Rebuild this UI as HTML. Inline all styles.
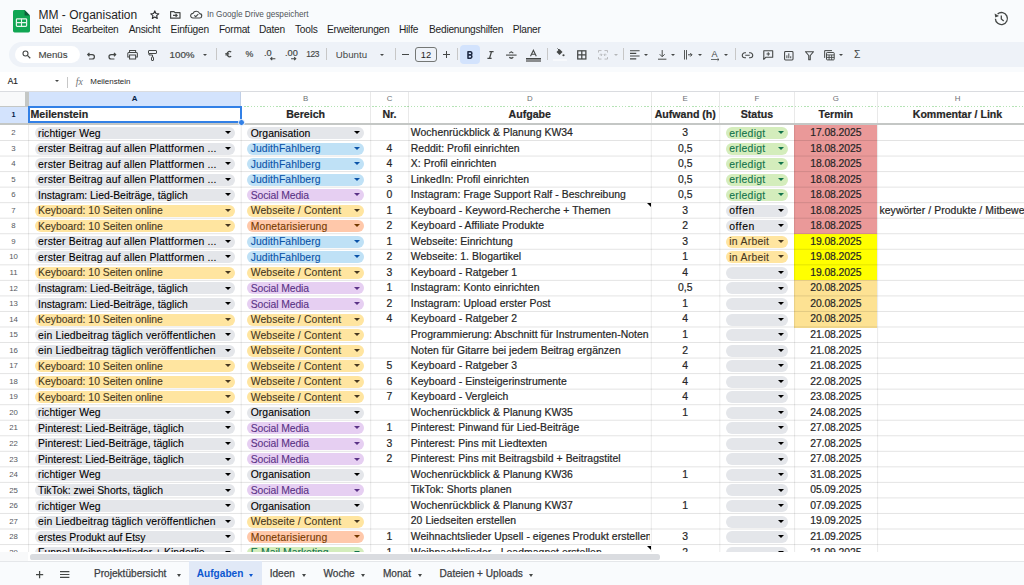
<!DOCTYPE html><html><head><meta charset="utf-8"><style>
*{box-sizing:border-box;margin:0;padding:0}
html,body{width:1024px;height:585px;overflow:hidden;background:#f9fbfd;font-family:"Liberation Sans", sans-serif;}
.a{position:absolute;white-space:nowrap}
.t{position:absolute;white-space:nowrap;line-height:1}
.menu{position:absolute;top:24.9px;font-size:10.2px;letter-spacing:-0.25px;line-height:1;color:#1f1f1f;white-space:nowrap}
svg{position:absolute;overflow:visible}
.cell{position:absolute;font-size:10.4px;line-height:16.0px;white-space:nowrap;overflow:hidden;color:#262626;-webkit-text-stroke:0.2px #262626}
.chip{position:absolute;height:12px;border-radius:6px}
.chip span{position:absolute;left:3.6px;top:-2.5px;font-size:10.4px;line-height:17.2px;white-space:nowrap}
.arr{position:absolute;width:0;height:0;border-left:3.3px solid transparent;border-right:3.3px solid transparent;border-top:3.9px solid #000}
.rn{position:absolute;left:0;width:27px;text-align:center;font-size:7.8px;line-height:15px;color:#55595e}
.hl{position:absolute;height:1px;background:rgba(0,0,0,0.115)}
.vl{position:absolute;width:1px;background:rgba(0,0,0,0.085)}
.tab{position:absolute;top:569.2px;font-size:10.1px;line-height:1;color:#3c4043;-webkit-text-stroke:0.25px #3c4043;white-space:nowrap}
.tarr{position:absolute;top:573.6px;width:0;height:0;border-left:2.7px solid transparent;border-right:2.7px solid transparent;border-top:3px solid #444746}
</style></head><body>
<svg style="left:12.5px;top:9.6px" width="17" height="22.4" viewBox="0 0 17 22.4">
<path d="M1.6 0 H11.6 L17 5.4 V20.8 Q17 22.4 15.4 22.4 H1.6 Q0 22.4 0 20.8 V1.6 Q0 0 1.6 0Z" fill="#11a653"/>
<path d="M11.6 0 V5.4 H17Z" fill="#0d5c3a"/>
<rect x="3.4" y="8.8" width="10.2" height="7.6" rx="0.8" fill="none" stroke="#e8f5ec" stroke-width="1.2"/>
<path d="M3.4 12.6 H13.6 M8.5 8.8 V16.4" stroke="#e8f5ec" stroke-width="1.1"/>
</svg>
<div class="t" style="left:38.5px;top:8.6px;font-size:12px;color:#1f1f1f">MM - Organisation</div>
<svg style="left:150.2px;top:10.0px" width="9.6" height="9.2" viewBox="0 0 24 23"><path d="M12 2.2l2.9 6.6 7.1.6-5.4 4.7 1.6 7-6.2-3.7-6.2 3.7 1.6-7L2 9.4l7.1-.6z" fill="none" stroke="#303134" stroke-width="2.8" stroke-linejoin="round"/></svg>
<svg style="left:170px;top:11px" width="10.6" height="7.8" viewBox="0 0 10.6 7.8"><path d="M0.6 0.6H4L5 1.7H10V7.2H0.6Z" fill="none" stroke="#444746" stroke-width="1.2" stroke-linejoin="round"/><path d="M3 4.4H7.2M5.6 2.9L7.2 4.4 5.6 5.9" fill="none" stroke="#444746" stroke-width="1.1"/></svg>
<svg style="left:190px;top:11.1px" width="12.2" height="7.6" viewBox="0 0 12.2 7.6"><path d="M3 7H9.4a2.2 2.2 0 0 0 .3-4.4A3.7 3.7 0 0 0 2.9 2.4 2.3 2.3 0 0 0 3 7z" fill="none" stroke="#444746" stroke-width="1.15" stroke-linejoin="round"/><path d="M4.3 4.3l1.4 1.4 2.6-2.6" fill="none" stroke="#444746" stroke-width="1.1"/></svg>
<div class="t" style="left:207px;top:10.6px;font-size:8.2px;color:#4f5358">In Google Drive gespeichert</div>
<div class="menu" style="left:39.2px">Datei</div>
<div class="menu" style="left:71.7px">Bearbeiten</div>
<div class="menu" style="left:128.7px">Ansicht</div>
<div class="menu" style="left:170.6px">Einfügen</div>
<div class="menu" style="left:218.9px">Format</div>
<div class="menu" style="left:258.9px">Daten</div>
<div class="menu" style="left:295px">Tools</div>
<div class="menu" style="left:327px">Erweiterungen</div>
<div class="menu" style="left:399px">Hilfe</div>
<div class="menu" style="left:429px">Bedienungshilfen</div>
<div class="menu" style="left:512.7px">Planer</div>
<svg style="left:994px;top:11.8px" width="14" height="13.5" viewBox="0 0 14 13.5"><path d="M3.6 1.9 A6 6 0 1 1 1.4 6.7" fill="none" stroke="#444746" stroke-width="1.35"/><path d="M0.6 1.6 L1.3 5.6 L5 4.1Z" fill="#444746"/><path d="M7.3 3.6v3.4l2.4 2.1" fill="none" stroke="#444746" stroke-width="1.3"/></svg>
<div class="a" style="left:8.8px;top:41.6px;width:1040px;height:25.6px;border-radius:13px;background:#eef2f8"></div>
<div class="a" style="left:15.2px;top:45.8px;width:64.5px;height:17.6px;border-radius:9px;background:#fff"></div>
<svg style="left:22px;top:49.5px" width="9" height="9" viewBox="0 0 18 18"><circle cx="7" cy="7" r="5" fill="none" stroke="#444746" stroke-width="2.2"/><path d="M10.8 10.8L16.5 16.5" stroke="#444746" stroke-width="2.4"/></svg>
<div class="t" style="left:38.5px;top:50.2px;font-size:9.7px;color:#444746;-webkit-text-stroke:0.15px #444746">Menüs</div>
<svg style="left:87px;top:51.6px" width="8.4" height="7.6" viewBox="0 0 17 15"><path d="M5 1.5 L1.5 5 L5 8.5" fill="none" stroke="#444746" stroke-width="2.5"/><path d="M2 5H10.5a4.5 4.5 0 0 1 0 9H4" fill="none" stroke="#444746" stroke-width="2.5"/></svg>
<svg style="left:107.5px;top:51.6px" width="8.4" height="7.6" viewBox="0 0 17 15"><path d="M12 1.5 L15.5 5 L12 8.5" fill="none" stroke="#444746" stroke-width="2.5"/><path d="M15 5H6.5a4.5 4.5 0 0 0 0 9H13" fill="none" stroke="#444746" stroke-width="2.5"/></svg>
<svg style="left:127px;top:50.2px" width="11.2" height="9.6" viewBox="0 0 22 19"><path d="M5 5V1h12v4" fill="none" stroke="#444746" stroke-width="2"/><path d="M5 14H1.5V7a2 2 0 0 1 2-2h15a2 2 0 0 1 2 2v7H17" fill="none" stroke="#444746" stroke-width="2"/><path d="M5 10h12v8H5z" fill="none" stroke="#444746" stroke-width="2"/></svg>
<svg style="left:148px;top:49.8px" width="9" height="11" viewBox="0 0 18 22"><rect x="1" y="1" width="16" height="6" rx="1" fill="none" stroke="#444746" stroke-width="2"/><path d="M2 7v3h7v4" fill="none" stroke="#444746" stroke-width="2"/><rect x="7" y="14" width="4" height="7" rx="1" fill="none" stroke="#444746" stroke-width="2"/></svg>
<div class="t" style="left:169.5px;top:50.2px;font-size:9.8px;color:#444746;-webkit-text-stroke:0.2px #444746">100%</div>
<div class="a" style="left:202.5px;top:53.8px;width:0;height:0;border-left:2.3px solid transparent;border-right:2.3px solid transparent;border-top:2.6px solid #444746"></div>
<div class="a" style="left:215.6px;top:48.3px;width:1px;height:12px;background:#c7c7c7"></div>
<svg style="left:225.2px;top:50.8px" width="6.6" height="6.4" viewBox="0 0 6.6 6.4"><path d="M6.2 1.1A2.6 2.6 0 1 0 6.2 5.3" fill="none" stroke="#444746" stroke-width="1.2"/><path d="M0.2 2.6H4.2M0.2 3.9H4.2" stroke="#444746" stroke-width="0.9"/></svg>
<div class="t" style="left:245.4px;top:50.2px;font-size:8.8px;color:#444746;-webkit-text-stroke:0.2px #444746">%</div>
<div class="t" style="left:264px;top:49px;font-size:9.2px;-webkit-text-stroke:0.2px #444746;color:#444746">.0</div>
<svg style="left:270.4px;top:57px" width="5.4" height="3.4" viewBox="0 0 11 7"><path d="M11 3.5H2M4.5 0.5L1.2 3.5 4.5 6.5" fill="none" stroke="#444746" stroke-width="2.2"/></svg>
<div class="t" style="left:285px;top:49px;font-size:9.2px;-webkit-text-stroke:0.2px #444746;color:#444746">.00</div>
<svg style="left:290.6px;top:57px" width="5.4" height="3.4" viewBox="0 0 11 7"><path d="M0 3.5H9M6.5 0.5L9.8 3.5 6.5 6.5" fill="none" stroke="#444746" stroke-width="2.2"/></svg>
<div class="t" style="left:306.2px;top:50.3px;font-size:8.4px;letter-spacing:-0.35px;color:#444746;-webkit-text-stroke:0.15px #444746">123</div>
<div class="a" style="left:325.6px;top:48.3px;width:1px;height:12px;background:#c7c7c7"></div>
<div class="t" style="left:335.8px;top:49.6px;font-size:9.7px;color:#444746">Ubuntu</div>
<div class="a" style="left:379.6px;top:53.8px;width:0;height:0;border-left:2.3px solid transparent;border-right:2.3px solid transparent;border-top:2.6px solid #444746"></div>
<div class="a" style="left:394.5px;top:48.3px;width:1px;height:12px;background:#c7c7c7"></div>
<div class="a" style="left:401.8px;top:54.2px;width:7px;height:1.2px;background:#444746"></div>
<div class="a" style="left:415.1px;top:47px;width:21.6px;height:15.2px;border:1px solid #747775;border-radius:3px;background:transparent"></div>
<div class="t" style="left:415.1px;width:21.6px;text-align:center;top:50.2px;font-size:9.4px;color:#1f1f1f">12</div>
<div class="a" style="left:443px;top:54.2px;width:7px;height:1.2px;background:#444746"></div><div class="a" style="left:445.9px;top:51.3px;width:1.2px;height:7px;background:#444746"></div>
<div class="a" style="left:457.3px;top:48.3px;width:1px;height:12px;background:#c7c7c7"></div>
<div class="a" style="left:460.4px;top:45px;width:19.4px;height:19px;border-radius:4px;background:#d3e3fd"></div>
<svg style="left:466.8px;top:50.7px" width="6.4" height="7.8" viewBox="0 0 6.4 7.8"><path d="M1 0.8H3.6a1.7 1.7 0 0 1 0 3.3H1ZM1 3.9H3.9a1.9 1.9 0 0 1 0 3.3H1Z" fill="none" stroke="#1f2a44" stroke-width="1.55" stroke-linejoin="round"/></svg>
<svg style="left:487.3px;top:50.8px" width="7" height="8" viewBox="0 0 7 8"><path d="M2.4 0.6H6.6M0.4 7.4H4.6M4.5 0.6L2.5 7.4" fill="none" stroke="#444746" stroke-width="1.3"/></svg>
<svg style="left:506.4px;top:50.6px" width="10.6" height="8.2" viewBox="0 0 10.6 8.2"><path d="M0 4.1H10.6" stroke="#444746" stroke-width="1.1"/><path d="M7.2 2.2A2 1.7 0 0 0 3.4 2.2" fill="none" stroke="#444746" stroke-width="1.1"/><path d="M3.4 6A2 1.7 0 0 0 7.2 6" fill="none" stroke="#444746" stroke-width="1.1"/><path d="M5.3 0.5V1.3M5.3 6.9V7.7" stroke="#444746" stroke-width="1"/></svg>
<svg style="left:529.6px;top:49.9px" width="6.8" height="6.2" viewBox="0 0 6.8 6.2"><path d="M0.5 6.2L3.4 0.3 6.3 6.2M1.5 4.2H5.3" fill="none" stroke="#444746" stroke-width="1.1"/></svg><div class="a" style="left:525.7px;top:57.8px;width:15px;height:1px;background:#444746"></div><div class="a" style="left:525.7px;top:59px;width:15px;height:2.8px;background:#8a8c8e"></div>
<div class="a" style="left:546.5px;top:48.3px;width:1px;height:12px;background:#c7c7c7"></div>
<svg style="left:554.6px;top:47.6px" width="10" height="9" viewBox="0 0 20 18"><path d="M3 8 L9 2 L15 8 L9 14Z" fill="#444746"/><path d="M5 1 L9 5" stroke="#444746" stroke-width="2"/><circle cx="17" cy="14.5" r="2.2" fill="#444746"/></svg>
<div class="a" style="left:553px;top:58.8px;width:14px;height:2px;background:#f7f9fc"></div>
<svg style="left:577px;top:50.2px" width="9.6" height="9.8" viewBox="0 0 20 20"><rect x="1.5" y="1.5" width="17" height="17" fill="none" stroke="#444746" stroke-width="2.6"/><path d="M10 1.5v17M1.5 10h17" stroke="#444746" stroke-width="2.6"/></svg>
<svg style="left:598px;top:50.4px" width="10" height="9.6" viewBox="0 0 20 19"><path d="M1 5V1h6M1 14v4h6M19 5V1h-6M19 14v4h-6" fill="none" stroke="#b4b6b8" stroke-width="1.8"/><path d="M3 9.5h5M6 7l2 2.5L6 12M17 9.5h-5M14 7l-2 2.5 2 2.5" fill="none" stroke="#b4b6b8" stroke-width="1.6"/></svg>
<div class="a" style="left:614.4px;top:54px;width:0;height:0;border-left:2.3px solid transparent;border-right:2.3px solid transparent;border-top:2.6px solid #b4b6b8"></div>
<div class="a" style="left:623.4px;top:48.3px;width:1px;height:12px;background:#c7c7c7"></div>
<svg style="left:630.3px;top:50.4px" width="9.6" height="9.6" viewBox="0 0 20 20"><path d="M0 1.5h20M0 7h13M0 12.5h20M0 18.5h13" stroke="#444746" stroke-width="2.2"/></svg>
<div class="a" style="left:644.3px;top:54px;width:0;height:0;border-left:2.3px solid transparent;border-right:2.3px solid transparent;border-top:2.6px solid #444746"></div>
<svg style="left:657.6px;top:50.2px" width="8.4" height="10" viewBox="0 0 17 20"><path d="M8.5 0v13M3.5 8.5l5 5 5-5" fill="none" stroke="#444746" stroke-width="2"/><path d="M0 18.5h17" stroke="#444746" stroke-width="2"/></svg>
<div class="a" style="left:671px;top:54px;width:0;height:0;border-left:2.3px solid transparent;border-right:2.3px solid transparent;border-top:2.6px solid #444746"></div>
<svg style="left:683.6px;top:50.4px" width="9" height="9.6" viewBox="0 0 18 19"><path d="M1 0v19M5 0v19" stroke="#444746" stroke-width="1.8"/><path d="M8 9.5h8M12.5 6l3.5 3.5-3.5 3.5" fill="none" stroke="#444746" stroke-width="2"/></svg>
<div class="a" style="left:697.9px;top:54px;width:0;height:0;border-left:2.3px solid transparent;border-right:2.3px solid transparent;border-top:2.6px solid #444746"></div>
<div class="t" style="left:711.5px;top:49.8px;font-size:9px;color:#444746">A</div>
<svg style="left:711px;top:58px" width="9" height="3" viewBox="0 0 18 6"><path d="M0 3h16M13 0.5l3 2.5-3 2.5" fill="none" stroke="#444746" stroke-width="1.6"/></svg>
<div class="a" style="left:724.3px;top:54px;width:0;height:0;border-left:2.3px solid transparent;border-right:2.3px solid transparent;border-top:2.6px solid #444746"></div>
<div class="a" style="left:734.6px;top:48.3px;width:1px;height:12px;background:#c7c7c7"></div>
<svg style="left:742px;top:51.6px" width="11" height="6.6" viewBox="0 0 22 13"><path d="M8 1.5H5.5a5 5 0 0 0 0 10H8M14 1.5h2.5a5 5 0 0 1 0 10H14M6.5 6.5h9" fill="none" stroke="#444746" stroke-width="2.2"/></svg>
<svg style="left:763px;top:50.2px" width="10.5" height="10.4" viewBox="0 0 21 21"><path d="M1.5 1.5h18v13H6l-4.5 4.5z" fill="none" stroke="#444746" stroke-width="2.2" stroke-linejoin="round"/><path d="M10.5 4.5v7M7 8h7" stroke="#444746" stroke-width="2"/></svg>
<svg style="left:784px;top:50.8px" width="9.6" height="9.6" viewBox="0 0 20 20"><rect x="1.2" y="1.2" width="17.6" height="17.6" rx="2" fill="none" stroke="#444746" stroke-width="2.2"/><path d="M6 15V9M10 15V5M14 15v-4" stroke="#444746" stroke-width="2"/></svg>
<svg style="left:805px;top:51.2px" width="9" height="9" viewBox="0 0 18 18"><path d="M1 1.5h16L10.5 9v8.5h-3V9z" fill="none" stroke="#444746" stroke-width="2.2" stroke-linejoin="round"/></svg>
<svg style="left:823.6px;top:50.4px" width="11" height="10.4" viewBox="0 0 22 21"><path d="M1.2 16V1.2H16" fill="none" stroke="#444746" stroke-width="2"/><rect x="5" y="5" width="15.5" height="15" rx="1.5" fill="none" stroke="#444746" stroke-width="2"/><path d="M5 10h15.5M5 15h15.5M10.2 10v10M15.3 10v10" stroke="#444746" stroke-width="1.8"/></svg>
<div class="a" style="left:838.5px;top:54px;width:0;height:0;border-left:2.3px solid transparent;border-right:2.3px solid transparent;border-top:2.6px solid #444746"></div>
<div class="t" style="left:854px;top:49.6px;font-size:10.4px;color:#444746">Σ</div>
<div class="a" style="left:0;top:72px;width:1024px;height:19.2px;background:#fff"></div>
<div class="t" style="left:7.8px;top:78.2px;font-size:8.2px;color:#1f1f1f;-webkit-text-stroke:0.2px #1f1f1f">A1</div>
<div class="a" style="left:54.7px;top:80.2px;width:0;height:0;border-left:2.3px solid transparent;border-right:2.3px solid transparent;border-top:2.6px solid #444746"></div>
<div class="a" style="left:67.3px;top:76.7px;width:1px;height:11px;background:#c7c7c7"></div>
<div class="t" style="left:75.8px;top:77.4px;font-size:9.8px;font-style:italic;color:#6f7378;font-family:'Liberation Serif',serif">fx</div>
<div class="t" style="left:90.3px;top:78.2px;font-size:7.95px;color:#1f1f1f">Meilenstein</div>
<div class="a" style="left:0;top:91px;width:1024px;height:461.29999999999995px;background:#fff;overflow:hidden">
<div class="a" style="left:0;top:0;width:1024px;height:1px;background:#dadce0"></div>
<div class="a" style="left:0;top:0.9px;width:25px;height:14.500000000000005px;background:#f8f9fa"></div>
<div class="a" style="left:28.3px;top:0.9px;width:212.6px;height:14.500000000000005px;background:#d3e3fd"></div>
<div class="a" style="left:0;top:15.400000000000006px;width:28.3px;height:16.19999999999999px;background:#d3e3fd"></div>
<div class="t" style="left:28.3px;width:212.6px;text-align:center;top:4.0px;font-size:7.9px;font-weight:700;color:#041e49">A</div>
<div class="t" style="left:240.9px;width:129.49999999999997px;text-align:center;top:4.0px;font-size:7.9px;font-weight:400;color:#6d7175">B</div>
<div class="t" style="left:370.4px;width:38.200000000000045px;text-align:center;top:4.0px;font-size:7.9px;font-weight:400;color:#6d7175">C</div>
<div class="t" style="left:408.6px;width:242.39999999999998px;text-align:center;top:4.0px;font-size:7.9px;font-weight:400;color:#6d7175">D</div>
<div class="t" style="left:651.0px;width:68.5px;text-align:center;top:4.0px;font-size:7.9px;font-weight:400;color:#6d7175">E</div>
<div class="t" style="left:719.5px;width:74.79999999999995px;text-align:center;top:4.0px;font-size:7.9px;font-weight:400;color:#6d7175">F</div>
<div class="t" style="left:794.3px;width:83.0px;text-align:center;top:4.0px;font-size:7.9px;font-weight:400;color:#6d7175">G</div>
<div class="t" style="left:877.3px;width:160.4000000000001px;text-align:center;top:4.0px;font-size:7.9px;font-weight:400;color:#6d7175">H</div>
<div class="vl" style="left:240.4px;top:1px;height:14.400000000000006px"></div>
<div class="vl" style="left:369.9px;top:1px;height:14.400000000000006px"></div>
<div class="vl" style="left:408.1px;top:1px;height:14.400000000000006px"></div>
<div class="vl" style="left:650.5px;top:1px;height:14.400000000000006px"></div>
<div class="vl" style="left:719.0px;top:1px;height:14.400000000000006px"></div>
<div class="vl" style="left:793.8px;top:1px;height:14.400000000000006px"></div>
<div class="vl" style="left:876.8px;top:1px;height:14.400000000000006px"></div>
<div class="a" style="left:240.9px;top:15.299999999999997px;width:783.1px;height:0;background:repeating-linear-gradient(90deg,#b5e3b5 0 1.4px,transparent 1.4px 3.2px);height:1px"></div>
<div class="a" style="left:25px;top:0.9px;width:3.5px;height:14.500000000000005px;background:#c4c7c5"></div>
<div class="a" style="left:0;top:15.200000000000003px;width:28px;height:1px;background:#c4c7c5"></div>
<div class="cell" style="left:28.3px;width:212.6px;top:15.1px;font-weight:700;font-size:10.6px;padding-left:2.2px">Meilenstein</div>
<div class="cell" style="left:240.9px;width:129.49999999999997px;top:15.1px;font-weight:700;font-size:10.6px;text-align:center">Bereich</div>
<div class="vl" style="left:240.4px;top:15.400000000000006px;height:16.19999999999999px"></div>
<div class="cell" style="left:370.4px;width:38.200000000000045px;top:15.1px;font-weight:700;font-size:10.6px;text-align:center">Nr.</div>
<div class="vl" style="left:369.9px;top:15.400000000000006px;height:16.19999999999999px"></div>
<div class="cell" style="left:408.6px;width:242.39999999999998px;top:15.1px;font-weight:700;font-size:10.6px;text-align:center">Aufgabe</div>
<div class="vl" style="left:408.1px;top:15.400000000000006px;height:16.19999999999999px"></div>
<div class="cell" style="left:651.0px;width:68.5px;top:15.1px;font-weight:700;font-size:10.6px;text-align:center">Aufwand (h)</div>
<div class="vl" style="left:650.5px;top:15.400000000000006px;height:16.19999999999999px"></div>
<div class="cell" style="left:719.5px;width:74.79999999999995px;top:15.1px;font-weight:700;font-size:10.6px;text-align:center">Status</div>
<div class="vl" style="left:719.0px;top:15.400000000000006px;height:16.19999999999999px"></div>
<div class="cell" style="left:794.3px;width:83.0px;top:15.1px;font-weight:700;font-size:10.6px;text-align:center">Termin</div>
<div class="vl" style="left:793.8px;top:15.400000000000006px;height:16.19999999999999px"></div>
<div class="cell" style="left:877.3px;width:160.4000000000001px;top:15.1px;font-weight:700;font-size:10.6px;text-align:center">Kommentar / Link</div>
<div class="vl" style="left:876.8px;top:15.400000000000006px;height:16.19999999999999px"></div>
<div class="t" style="left:0;width:27px;text-align:center;top:20.200000000000003px;font-size:7.3px;font-weight:700;color:#041e49">1</div>
<div class="a" style="left:0;top:31.5px;width:1024px;height:2.6px;background:#c4c7c5"></div>
<div class="rn" style="top:34.2px">2</div>
<div class="a" style="left:794.3px;top:34.0px;width:83.0px;height:16.109999999999992px;background:#ea9999"></div>
<div class="chip" style="left:34.5px;top:36.1px;width:200.4px;background:#e4e6ea"><span style="color:#000000;-webkit-text-stroke:0.1px #000000;letter-spacing:0.12px">richtiger Weg</span><div class="arr" style="right:4.3px;top:4.1px;border-top-color:#000000"></div></div>
<div class="chip" style="left:247.1px;top:36.1px;width:117.29999999999998px;background:#e4e6ea"><span style="color:#000000;-webkit-text-stroke:0.1px #000000;letter-spacing:0.06px">Organisation</span><div class="arr" style="right:4.3px;top:4.1px;border-top-color:#000000"></div></div>
<div class="chip" style="left:725.7px;top:36.1px;width:62.59999999999991px;background:#d4edbc"><span style="color:#11734b;-webkit-text-stroke:0.1px #11734b;letter-spacing:0.25px">erledigt</span><div class="arr" style="right:4.3px;top:4.1px;border-top-color:#11734b"></div></div>
<div class="cell" style="left:408.6px;width:241.89999999999998px;top:34.0px;padding-left:2.2px;letter-spacing:0.06px">Wochenrückblick &amp; Planung KW34</div>
<div class="cell" style="left:651.0px;width:68.5px;top:34.0px;text-align:center">3</div>
<div class="cell" style="left:794.3px;width:83.0px;top:34.0px;text-align:center;letter-spacing:-0.08px">17.08.2025</div>
<div class="rn" style="top:49.709999999999994px">3</div>
<div class="a" style="left:794.3px;top:49.50999999999999px;width:83.0px;height:16.140000000000022px;background:#ea9999"></div>
<div class="chip" style="left:34.5px;top:51.60999999999999px;width:200.4px;background:#e4e6ea"><span style="color:#000000;-webkit-text-stroke:0.1px #000000;letter-spacing:0.16px">erster Beitrag auf allen Plattformen ...</span><div class="arr" style="right:4.3px;top:4.1px;border-top-color:#000000"></div></div>
<div class="chip" style="left:247.1px;top:51.60999999999999px;width:117.29999999999998px;background:#bfe1f6"><span style="color:#0a53a8;-webkit-text-stroke:0.1px #0a53a8;letter-spacing:0.08px">JudithFahlberg</span><div class="arr" style="right:4.3px;top:4.1px;border-top-color:#0a53a8"></div></div>
<div class="chip" style="left:725.7px;top:51.60999999999999px;width:62.59999999999991px;background:#d4edbc"><span style="color:#11734b;-webkit-text-stroke:0.1px #11734b;letter-spacing:0.25px">erledigt</span><div class="arr" style="right:4.3px;top:4.1px;border-top-color:#11734b"></div></div>
<div class="cell" style="left:370.4px;width:38.200000000000045px;top:49.50999999999999px;text-align:center">4</div>
<div class="cell" style="left:408.6px;width:241.89999999999998px;top:49.50999999999999px;padding-left:2.2px;letter-spacing:0.06px">Reddit: Profil einrichten</div>
<div class="cell" style="left:651.0px;width:68.5px;top:49.50999999999999px;text-align:center">0,5</div>
<div class="cell" style="left:794.3px;width:83.0px;top:49.50999999999999px;text-align:center;letter-spacing:-0.08px">18.08.2025</div>
<div class="rn" style="top:65.25000000000001px">4</div>
<div class="a" style="left:794.3px;top:65.05000000000001px;width:83.0px;height:16.139999999999993px;background:#ea9999"></div>
<div class="chip" style="left:34.5px;top:67.15px;width:200.4px;background:#e4e6ea"><span style="color:#000000;-webkit-text-stroke:0.1px #000000;letter-spacing:0.16px">erster Beitrag auf allen Plattformen ...</span><div class="arr" style="right:4.3px;top:4.1px;border-top-color:#000000"></div></div>
<div class="chip" style="left:247.1px;top:67.15px;width:117.29999999999998px;background:#bfe1f6"><span style="color:#0a53a8;-webkit-text-stroke:0.1px #0a53a8;letter-spacing:0.08px">JudithFahlberg</span><div class="arr" style="right:4.3px;top:4.1px;border-top-color:#0a53a8"></div></div>
<div class="chip" style="left:725.7px;top:67.15px;width:62.59999999999991px;background:#d4edbc"><span style="color:#11734b;-webkit-text-stroke:0.1px #11734b;letter-spacing:0.25px">erledigt</span><div class="arr" style="right:4.3px;top:4.1px;border-top-color:#11734b"></div></div>
<div class="cell" style="left:370.4px;width:38.200000000000045px;top:65.05000000000001px;text-align:center">4</div>
<div class="cell" style="left:408.6px;width:241.89999999999998px;top:65.05000000000001px;padding-left:2.2px;letter-spacing:0.06px">X: Profil einrichten</div>
<div class="cell" style="left:651.0px;width:68.5px;top:65.05000000000001px;text-align:center">0,5</div>
<div class="cell" style="left:794.3px;width:83.0px;top:65.05000000000001px;text-align:center;letter-spacing:-0.08px">18.08.2025</div>
<div class="rn" style="top:80.79px">5</div>
<div class="a" style="left:794.3px;top:80.59px;width:83.0px;height:16.139999999999993px;background:#ea9999"></div>
<div class="chip" style="left:34.5px;top:82.69px;width:200.4px;background:#e4e6ea"><span style="color:#000000;-webkit-text-stroke:0.1px #000000;letter-spacing:0.16px">erster Beitrag auf allen Plattformen ...</span><div class="arr" style="right:4.3px;top:4.1px;border-top-color:#000000"></div></div>
<div class="chip" style="left:247.1px;top:82.69px;width:117.29999999999998px;background:#bfe1f6"><span style="color:#0a53a8;-webkit-text-stroke:0.1px #0a53a8;letter-spacing:0.08px">JudithFahlberg</span><div class="arr" style="right:4.3px;top:4.1px;border-top-color:#0a53a8"></div></div>
<div class="chip" style="left:725.7px;top:82.69px;width:62.59999999999991px;background:#d4edbc"><span style="color:#11734b;-webkit-text-stroke:0.1px #11734b;letter-spacing:0.25px">erledigt</span><div class="arr" style="right:4.3px;top:4.1px;border-top-color:#11734b"></div></div>
<div class="cell" style="left:370.4px;width:38.200000000000045px;top:80.59px;text-align:center">3</div>
<div class="cell" style="left:408.6px;width:241.89999999999998px;top:80.59px;padding-left:2.2px;letter-spacing:0.06px">LinkedIn: Profil einrichten</div>
<div class="cell" style="left:651.0px;width:68.5px;top:80.59px;text-align:center">0,5</div>
<div class="cell" style="left:794.3px;width:83.0px;top:80.59px;text-align:center;letter-spacing:-0.08px">18.08.2025</div>
<div class="rn" style="top:96.33px">6</div>
<div class="a" style="left:794.3px;top:96.13px;width:83.0px;height:16.140000000000022px;background:#ea9999"></div>
<div class="chip" style="left:34.5px;top:98.22999999999999px;width:200.4px;background:#e4e6ea"><span style="color:#000000;-webkit-text-stroke:0.1px #000000;letter-spacing:0px">Instagram: Lied-Beiträge, täglich</span><div class="arr" style="right:4.3px;top:4.1px;border-top-color:#000000"></div></div>
<div class="chip" style="left:247.1px;top:98.22999999999999px;width:117.29999999999998px;background:#e6cff2"><span style="color:#5a3286;-webkit-text-stroke:0.1px #5a3286;letter-spacing:-0.1px">Social Media</span><div class="arr" style="right:4.3px;top:4.1px;border-top-color:#5a3286"></div></div>
<div class="chip" style="left:725.7px;top:98.22999999999999px;width:62.59999999999991px;background:#d4edbc"><span style="color:#11734b;-webkit-text-stroke:0.1px #11734b;letter-spacing:0.25px">erledigt</span><div class="arr" style="right:4.3px;top:4.1px;border-top-color:#11734b"></div></div>
<div class="cell" style="left:370.4px;width:38.200000000000045px;top:96.13px;text-align:center">0</div>
<div class="cell" style="left:408.6px;width:241.89999999999998px;top:96.13px;padding-left:2.2px;letter-spacing:0.06px">Instagram: Frage Support Ralf - Beschreibung</div>
<div class="cell" style="left:651.0px;width:68.5px;top:96.13px;text-align:center">0,5</div>
<div class="cell" style="left:794.3px;width:83.0px;top:96.13px;text-align:center;letter-spacing:-0.08px">18.08.2025</div>
<div class="rn" style="top:111.87000000000002px">7</div>
<div class="a" style="left:794.3px;top:111.67000000000002px;width:83.0px;height:16.139999999999993px;background:#ea9999"></div>
<div class="chip" style="left:34.5px;top:113.77000000000001px;width:200.4px;background:#ffe5a0"><span style="color:#473821;-webkit-text-stroke:0.1px #473821;letter-spacing:0px">Keyboard: 10 Seiten online</span><div class="arr" style="right:4.3px;top:4.1px;border-top-color:#473821"></div></div>
<div class="chip" style="left:247.1px;top:113.77000000000001px;width:117.29999999999998px;background:#ffe5a0"><span style="color:#473821;-webkit-text-stroke:0.1px #473821;letter-spacing:0.13px">Webseite / Content</span><div class="arr" style="right:4.3px;top:4.1px;border-top-color:#473821"></div></div>
<div class="chip" style="left:725.7px;top:113.77000000000001px;width:62.59999999999991px;background:#e4e6ea"><span style="color:#000000;-webkit-text-stroke:0.1px #000000;letter-spacing:0.5px">offen</span><div class="arr" style="right:4.3px;top:4.1px;border-top-color:#000000"></div></div>
<div class="cell" style="left:370.4px;width:38.200000000000045px;top:111.67000000000002px;text-align:center">1</div>
<div class="cell" style="left:408.6px;width:241.89999999999998px;top:111.67000000000002px;padding-left:2.2px;letter-spacing:0.06px">Keyboard - Keyword-Recherche + Themen</div>
<div class="cell" style="left:651.0px;width:68.5px;top:111.67000000000002px;text-align:center">3</div>
<div class="cell" style="left:794.3px;width:83.0px;top:111.67000000000002px;text-align:center;letter-spacing:-0.08px">18.08.2025</div>
<div class="cell" style="left:877.3px;width:300px;top:111.67000000000002px;padding-left:2.2px;letter-spacing:0.08px">keywörter / Produkte / Mitbewerber</div>
<div class="rn" style="top:127.41000000000001px">8</div>
<div class="a" style="left:794.3px;top:127.21000000000001px;width:83.0px;height:16.139999999999993px;background:#ea9999"></div>
<div class="chip" style="left:34.5px;top:129.31px;width:200.4px;background:#ffe5a0"><span style="color:#473821;-webkit-text-stroke:0.1px #473821;letter-spacing:0px">Keyboard: 10 Seiten online</span><div class="arr" style="right:4.3px;top:4.1px;border-top-color:#473821"></div></div>
<div class="chip" style="left:247.1px;top:129.31px;width:117.29999999999998px;background:#ffc8aa"><span style="color:#753800;-webkit-text-stroke:0.1px #753800;letter-spacing:0.15px">Monetarisierung</span><div class="arr" style="right:4.3px;top:4.1px;border-top-color:#753800"></div></div>
<div class="chip" style="left:725.7px;top:129.31px;width:62.59999999999991px;background:#e4e6ea"><span style="color:#000000;-webkit-text-stroke:0.1px #000000;letter-spacing:0.5px">offen</span><div class="arr" style="right:4.3px;top:4.1px;border-top-color:#000000"></div></div>
<div class="cell" style="left:370.4px;width:38.200000000000045px;top:127.21000000000001px;text-align:center">2</div>
<div class="cell" style="left:408.6px;width:241.89999999999998px;top:127.21000000000001px;padding-left:2.2px;letter-spacing:0.06px">Keyboard - Affiliate Produkte</div>
<div class="cell" style="left:651.0px;width:68.5px;top:127.21000000000001px;text-align:center">2</div>
<div class="cell" style="left:794.3px;width:83.0px;top:127.21000000000001px;text-align:center;letter-spacing:-0.08px">18.08.2025</div>
<div class="rn" style="top:142.95px">9</div>
<div class="a" style="left:794.3px;top:142.75px;width:83.0px;height:16.139999999999993px;background:#ffff00"></div>
<div class="chip" style="left:34.5px;top:144.85px;width:200.4px;background:#e4e6ea"><span style="color:#000000;-webkit-text-stroke:0.1px #000000;letter-spacing:0.16px">erster Beitrag auf allen Plattformen ...</span><div class="arr" style="right:4.3px;top:4.1px;border-top-color:#000000"></div></div>
<div class="chip" style="left:247.1px;top:144.85px;width:117.29999999999998px;background:#bfe1f6"><span style="color:#0a53a8;-webkit-text-stroke:0.1px #0a53a8;letter-spacing:0.08px">JudithFahlberg</span><div class="arr" style="right:4.3px;top:4.1px;border-top-color:#0a53a8"></div></div>
<div class="chip" style="left:725.7px;top:144.85px;width:62.59999999999991px;background:#ffe5a0"><span style="color:#473821;-webkit-text-stroke:0.1px #473821;letter-spacing:0.27px">in Arbeit</span><div class="arr" style="right:4.3px;top:4.1px;border-top-color:#473821"></div></div>
<div class="cell" style="left:370.4px;width:38.200000000000045px;top:142.75px;text-align:center">1</div>
<div class="cell" style="left:408.6px;width:241.89999999999998px;top:142.75px;padding-left:2.2px;letter-spacing:0.06px">Webseite: Einrichtung</div>
<div class="cell" style="left:651.0px;width:68.5px;top:142.75px;text-align:center">3</div>
<div class="cell" style="left:794.3px;width:83.0px;top:142.75px;text-align:center;letter-spacing:-0.08px">19.08.2025</div>
<div class="rn" style="top:158.48999999999998px">10</div>
<div class="a" style="left:794.3px;top:158.29px;width:83.0px;height:16.139999999999993px;background:#ffff00"></div>
<div class="chip" style="left:34.5px;top:160.39px;width:200.4px;background:#e4e6ea"><span style="color:#000000;-webkit-text-stroke:0.1px #000000;letter-spacing:0.16px">erster Beitrag auf allen Plattformen ...</span><div class="arr" style="right:4.3px;top:4.1px;border-top-color:#000000"></div></div>
<div class="chip" style="left:247.1px;top:160.39px;width:117.29999999999998px;background:#bfe1f6"><span style="color:#0a53a8;-webkit-text-stroke:0.1px #0a53a8;letter-spacing:0.08px">JudithFahlberg</span><div class="arr" style="right:4.3px;top:4.1px;border-top-color:#0a53a8"></div></div>
<div class="chip" style="left:725.7px;top:160.39px;width:62.59999999999991px;background:#ffe5a0"><span style="color:#473821;-webkit-text-stroke:0.1px #473821;letter-spacing:0.27px">in Arbeit</span><div class="arr" style="right:4.3px;top:4.1px;border-top-color:#473821"></div></div>
<div class="cell" style="left:370.4px;width:38.200000000000045px;top:158.29px;text-align:center">2</div>
<div class="cell" style="left:408.6px;width:241.89999999999998px;top:158.29px;padding-left:2.2px;letter-spacing:0.06px">Webseite: 1. Blogartikel</div>
<div class="cell" style="left:651.0px;width:68.5px;top:158.29px;text-align:center">1</div>
<div class="cell" style="left:794.3px;width:83.0px;top:158.29px;text-align:center;letter-spacing:-0.08px">19.08.2025</div>
<div class="rn" style="top:174.02999999999997px">11</div>
<div class="a" style="left:794.3px;top:173.82999999999998px;width:83.0px;height:16.140000000000022px;background:#ffff00"></div>
<div class="chip" style="left:34.5px;top:175.92999999999998px;width:200.4px;background:#ffe5a0"><span style="color:#473821;-webkit-text-stroke:0.1px #473821;letter-spacing:0px">Keyboard: 10 Seiten online</span><div class="arr" style="right:4.3px;top:4.1px;border-top-color:#473821"></div></div>
<div class="chip" style="left:247.1px;top:175.92999999999998px;width:117.29999999999998px;background:#ffe5a0"><span style="color:#473821;-webkit-text-stroke:0.1px #473821;letter-spacing:0.13px">Webseite / Content</span><div class="arr" style="right:4.3px;top:4.1px;border-top-color:#473821"></div></div>
<div class="chip" style="left:725.7px;top:175.92999999999998px;width:62.59999999999991px;background:#e4e6ea"><span style="color:#000000;-webkit-text-stroke:0.1px #000000;letter-spacing:0px"></span><div class="arr" style="right:4.3px;top:4.1px;border-top-color:#000000"></div></div>
<div class="cell" style="left:370.4px;width:38.200000000000045px;top:173.82999999999998px;text-align:center">3</div>
<div class="cell" style="left:408.6px;width:241.89999999999998px;top:173.82999999999998px;padding-left:2.2px;letter-spacing:0.06px">Keyboard - Ratgeber 1</div>
<div class="cell" style="left:651.0px;width:68.5px;top:173.82999999999998px;text-align:center">4</div>
<div class="cell" style="left:794.3px;width:83.0px;top:173.82999999999998px;text-align:center;letter-spacing:-0.08px">19.08.2025</div>
<div class="rn" style="top:189.57px">12</div>
<div class="a" style="left:794.3px;top:189.37px;width:83.0px;height:16.139999999999965px;background:#fde293"></div>
<div class="chip" style="left:34.5px;top:191.47px;width:200.4px;background:#e4e6ea"><span style="color:#000000;-webkit-text-stroke:0.1px #000000;letter-spacing:0px">Instagram: Lied-Beiträge, täglich</span><div class="arr" style="right:4.3px;top:4.1px;border-top-color:#000000"></div></div>
<div class="chip" style="left:247.1px;top:191.47px;width:117.29999999999998px;background:#e6cff2"><span style="color:#5a3286;-webkit-text-stroke:0.1px #5a3286;letter-spacing:-0.1px">Social Media</span><div class="arr" style="right:4.3px;top:4.1px;border-top-color:#5a3286"></div></div>
<div class="chip" style="left:725.7px;top:191.47px;width:62.59999999999991px;background:#e4e6ea"><span style="color:#000000;-webkit-text-stroke:0.1px #000000;letter-spacing:0px"></span><div class="arr" style="right:4.3px;top:4.1px;border-top-color:#000000"></div></div>
<div class="cell" style="left:370.4px;width:38.200000000000045px;top:189.37px;text-align:center">1</div>
<div class="cell" style="left:408.6px;width:241.89999999999998px;top:189.37px;padding-left:2.2px;letter-spacing:0.06px">Instagram: Konto einrichten</div>
<div class="cell" style="left:651.0px;width:68.5px;top:189.37px;text-align:center">0,5</div>
<div class="cell" style="left:794.3px;width:83.0px;top:189.37px;text-align:center;letter-spacing:-0.08px">20.08.2025</div>
<div class="rn" style="top:205.10999999999996px">13</div>
<div class="a" style="left:794.3px;top:204.90999999999997px;width:83.0px;height:16.140000000000022px;background:#fde293"></div>
<div class="chip" style="left:34.5px;top:207.00999999999996px;width:200.4px;background:#e4e6ea"><span style="color:#000000;-webkit-text-stroke:0.1px #000000;letter-spacing:0px">Instagram: Lied-Beiträge, täglich</span><div class="arr" style="right:4.3px;top:4.1px;border-top-color:#000000"></div></div>
<div class="chip" style="left:247.1px;top:207.00999999999996px;width:117.29999999999998px;background:#e6cff2"><span style="color:#5a3286;-webkit-text-stroke:0.1px #5a3286;letter-spacing:-0.1px">Social Media</span><div class="arr" style="right:4.3px;top:4.1px;border-top-color:#5a3286"></div></div>
<div class="chip" style="left:725.7px;top:207.00999999999996px;width:62.59999999999991px;background:#e4e6ea"><span style="color:#000000;-webkit-text-stroke:0.1px #000000;letter-spacing:0px"></span><div class="arr" style="right:4.3px;top:4.1px;border-top-color:#000000"></div></div>
<div class="cell" style="left:370.4px;width:38.200000000000045px;top:204.90999999999997px;text-align:center">2</div>
<div class="cell" style="left:408.6px;width:241.89999999999998px;top:204.90999999999997px;padding-left:2.2px;letter-spacing:0.06px">Instagram: Upload erster Post</div>
<div class="cell" style="left:651.0px;width:68.5px;top:204.90999999999997px;text-align:center">1</div>
<div class="cell" style="left:794.3px;width:83.0px;top:204.90999999999997px;text-align:center;letter-spacing:-0.08px">20.08.2025</div>
<div class="rn" style="top:220.64999999999998px">14</div>
<div class="a" style="left:794.3px;top:220.45px;width:83.0px;height:16.140000000000022px;background:#fde293"></div>
<div class="chip" style="left:34.5px;top:222.54999999999998px;width:200.4px;background:#ffe5a0"><span style="color:#473821;-webkit-text-stroke:0.1px #473821;letter-spacing:0px">Keyboard: 10 Seiten online</span><div class="arr" style="right:4.3px;top:4.1px;border-top-color:#473821"></div></div>
<div class="chip" style="left:247.1px;top:222.54999999999998px;width:117.29999999999998px;background:#ffe5a0"><span style="color:#473821;-webkit-text-stroke:0.1px #473821;letter-spacing:0.13px">Webseite / Content</span><div class="arr" style="right:4.3px;top:4.1px;border-top-color:#473821"></div></div>
<div class="chip" style="left:725.7px;top:222.54999999999998px;width:62.59999999999991px;background:#e4e6ea"><span style="color:#000000;-webkit-text-stroke:0.1px #000000;letter-spacing:0px"></span><div class="arr" style="right:4.3px;top:4.1px;border-top-color:#000000"></div></div>
<div class="cell" style="left:370.4px;width:38.200000000000045px;top:220.45px;text-align:center">4</div>
<div class="cell" style="left:408.6px;width:241.89999999999998px;top:220.45px;padding-left:2.2px;letter-spacing:0.06px">Keyboard - Ratgeber 2</div>
<div class="cell" style="left:651.0px;width:68.5px;top:220.45px;text-align:center">4</div>
<div class="cell" style="left:794.3px;width:83.0px;top:220.45px;text-align:center;letter-spacing:-0.08px">20.08.2025</div>
<div class="rn" style="top:236.19px">15</div>
<div class="chip" style="left:34.5px;top:238.09px;width:200.4px;background:#e4e6ea"><span style="color:#000000;-webkit-text-stroke:0.1px #000000;letter-spacing:0.16px">ein Liedbeitrag täglich veröffentlichen</span><div class="arr" style="right:4.3px;top:4.1px;border-top-color:#000000"></div></div>
<div class="chip" style="left:247.1px;top:238.09px;width:117.29999999999998px;background:#ffe5a0"><span style="color:#473821;-webkit-text-stroke:0.1px #473821;letter-spacing:0.13px">Webseite / Content</span><div class="arr" style="right:4.3px;top:4.1px;border-top-color:#473821"></div></div>
<div class="chip" style="left:725.7px;top:238.09px;width:62.59999999999991px;background:#e4e6ea"><span style="color:#000000;-webkit-text-stroke:0.1px #000000;letter-spacing:0px"></span><div class="arr" style="right:4.3px;top:4.1px;border-top-color:#000000"></div></div>
<div class="cell" style="left:408.6px;width:241.89999999999998px;top:235.99px;padding-left:2.2px;letter-spacing:0.06px">Programmierung: Abschnitt für Instrumenten-Noten</div>
<div class="cell" style="left:651.0px;width:68.5px;top:235.99px;text-align:center">1</div>
<div class="cell" style="left:794.3px;width:83.0px;top:235.99px;text-align:center;letter-spacing:-0.08px">21.08.2025</div>
<div class="rn" style="top:251.72999999999996px">16</div>
<div class="chip" style="left:34.5px;top:253.62999999999997px;width:200.4px;background:#e4e6ea"><span style="color:#000000;-webkit-text-stroke:0.1px #000000;letter-spacing:0.16px">ein Liedbeitrag täglich veröffentlichen</span><div class="arr" style="right:4.3px;top:4.1px;border-top-color:#000000"></div></div>
<div class="chip" style="left:247.1px;top:253.62999999999997px;width:117.29999999999998px;background:#ffe5a0"><span style="color:#473821;-webkit-text-stroke:0.1px #473821;letter-spacing:0.13px">Webseite / Content</span><div class="arr" style="right:4.3px;top:4.1px;border-top-color:#473821"></div></div>
<div class="chip" style="left:725.7px;top:253.62999999999997px;width:62.59999999999991px;background:#e4e6ea"><span style="color:#000000;-webkit-text-stroke:0.1px #000000;letter-spacing:0px"></span><div class="arr" style="right:4.3px;top:4.1px;border-top-color:#000000"></div></div>
<div class="cell" style="left:408.6px;width:241.89999999999998px;top:251.52999999999997px;padding-left:2.2px;letter-spacing:0.06px">Noten für Gitarre bei jedem Beitrag ergänzen</div>
<div class="cell" style="left:651.0px;width:68.5px;top:251.52999999999997px;text-align:center">2</div>
<div class="cell" style="left:794.3px;width:83.0px;top:251.52999999999997px;text-align:center;letter-spacing:-0.08px">21.08.2025</div>
<div class="rn" style="top:267.27px">17</div>
<div class="chip" style="left:34.5px;top:269.17px;width:200.4px;background:#ffe5a0"><span style="color:#473821;-webkit-text-stroke:0.1px #473821;letter-spacing:0px">Keyboard: 10 Seiten online</span><div class="arr" style="right:4.3px;top:4.1px;border-top-color:#473821"></div></div>
<div class="chip" style="left:247.1px;top:269.17px;width:117.29999999999998px;background:#ffe5a0"><span style="color:#473821;-webkit-text-stroke:0.1px #473821;letter-spacing:0.13px">Webseite / Content</span><div class="arr" style="right:4.3px;top:4.1px;border-top-color:#473821"></div></div>
<div class="chip" style="left:725.7px;top:269.17px;width:62.59999999999991px;background:#e4e6ea"><span style="color:#000000;-webkit-text-stroke:0.1px #000000;letter-spacing:0px"></span><div class="arr" style="right:4.3px;top:4.1px;border-top-color:#000000"></div></div>
<div class="cell" style="left:370.4px;width:38.200000000000045px;top:267.07px;text-align:center">5</div>
<div class="cell" style="left:408.6px;width:241.89999999999998px;top:267.07px;padding-left:2.2px;letter-spacing:0.06px">Keyboard - Ratgeber 3</div>
<div class="cell" style="left:651.0px;width:68.5px;top:267.07px;text-align:center">4</div>
<div class="cell" style="left:794.3px;width:83.0px;top:267.07px;text-align:center;letter-spacing:-0.08px">21.08.2025</div>
<div class="rn" style="top:282.81px">18</div>
<div class="chip" style="left:34.5px;top:284.71000000000004px;width:200.4px;background:#ffe5a0"><span style="color:#473821;-webkit-text-stroke:0.1px #473821;letter-spacing:0px">Keyboard: 10 Seiten online</span><div class="arr" style="right:4.3px;top:4.1px;border-top-color:#473821"></div></div>
<div class="chip" style="left:247.1px;top:284.71000000000004px;width:117.29999999999998px;background:#ffe5a0"><span style="color:#473821;-webkit-text-stroke:0.1px #473821;letter-spacing:0.13px">Webseite / Content</span><div class="arr" style="right:4.3px;top:4.1px;border-top-color:#473821"></div></div>
<div class="chip" style="left:725.7px;top:284.71000000000004px;width:62.59999999999991px;background:#e4e6ea"><span style="color:#000000;-webkit-text-stroke:0.1px #000000;letter-spacing:0px"></span><div class="arr" style="right:4.3px;top:4.1px;border-top-color:#000000"></div></div>
<div class="cell" style="left:370.4px;width:38.200000000000045px;top:282.61px;text-align:center">6</div>
<div class="cell" style="left:408.6px;width:241.89999999999998px;top:282.61px;padding-left:2.2px;letter-spacing:0.06px">Keyboard - Einsteigerinstrumente</div>
<div class="cell" style="left:651.0px;width:68.5px;top:282.61px;text-align:center">4</div>
<div class="cell" style="left:794.3px;width:83.0px;top:282.61px;text-align:center;letter-spacing:-0.08px">22.08.2025</div>
<div class="rn" style="top:298.34999999999997px">19</div>
<div class="chip" style="left:34.5px;top:300.25px;width:200.4px;background:#ffe5a0"><span style="color:#473821;-webkit-text-stroke:0.1px #473821;letter-spacing:0px">Keyboard: 10 Seiten online</span><div class="arr" style="right:4.3px;top:4.1px;border-top-color:#473821"></div></div>
<div class="chip" style="left:247.1px;top:300.25px;width:117.29999999999998px;background:#ffe5a0"><span style="color:#473821;-webkit-text-stroke:0.1px #473821;letter-spacing:0.13px">Webseite / Content</span><div class="arr" style="right:4.3px;top:4.1px;border-top-color:#473821"></div></div>
<div class="chip" style="left:725.7px;top:300.25px;width:62.59999999999991px;background:#e4e6ea"><span style="color:#000000;-webkit-text-stroke:0.1px #000000;letter-spacing:0px"></span><div class="arr" style="right:4.3px;top:4.1px;border-top-color:#000000"></div></div>
<div class="cell" style="left:370.4px;width:38.200000000000045px;top:298.15px;text-align:center">7</div>
<div class="cell" style="left:408.6px;width:241.89999999999998px;top:298.15px;padding-left:2.2px;letter-spacing:0.06px">Keyboard - Vergleich</div>
<div class="cell" style="left:651.0px;width:68.5px;top:298.15px;text-align:center">4</div>
<div class="cell" style="left:794.3px;width:83.0px;top:298.15px;text-align:center;letter-spacing:-0.08px">23.08.2025</div>
<div class="rn" style="top:313.89px">20</div>
<div class="chip" style="left:34.5px;top:315.79px;width:200.4px;background:#e4e6ea"><span style="color:#000000;-webkit-text-stroke:0.1px #000000;letter-spacing:0.12px">richtiger Weg</span><div class="arr" style="right:4.3px;top:4.1px;border-top-color:#000000"></div></div>
<div class="chip" style="left:247.1px;top:315.79px;width:117.29999999999998px;background:#e4e6ea"><span style="color:#000000;-webkit-text-stroke:0.1px #000000;letter-spacing:0.06px">Organisation</span><div class="arr" style="right:4.3px;top:4.1px;border-top-color:#000000"></div></div>
<div class="chip" style="left:725.7px;top:315.79px;width:62.59999999999991px;background:#e4e6ea"><span style="color:#000000;-webkit-text-stroke:0.1px #000000;letter-spacing:0px"></span><div class="arr" style="right:4.3px;top:4.1px;border-top-color:#000000"></div></div>
<div class="cell" style="left:408.6px;width:241.89999999999998px;top:313.69px;padding-left:2.2px;letter-spacing:0.06px">Wochenrückblick &amp; Planung KW35</div>
<div class="cell" style="left:651.0px;width:68.5px;top:313.69px;text-align:center">1</div>
<div class="cell" style="left:794.3px;width:83.0px;top:313.69px;text-align:center;letter-spacing:-0.08px">24.08.2025</div>
<div class="rn" style="top:329.42999999999995px">21</div>
<div class="chip" style="left:34.5px;top:331.33px;width:200.4px;background:#e4e6ea"><span style="color:#000000;-webkit-text-stroke:0.1px #000000;letter-spacing:0.04px">Pinterest: Lied-Beiträge, täglich</span><div class="arr" style="right:4.3px;top:4.1px;border-top-color:#000000"></div></div>
<div class="chip" style="left:247.1px;top:331.33px;width:117.29999999999998px;background:#e6cff2"><span style="color:#5a3286;-webkit-text-stroke:0.1px #5a3286;letter-spacing:-0.1px">Social Media</span><div class="arr" style="right:4.3px;top:4.1px;border-top-color:#5a3286"></div></div>
<div class="chip" style="left:725.7px;top:331.33px;width:62.59999999999991px;background:#e4e6ea"><span style="color:#000000;-webkit-text-stroke:0.1px #000000;letter-spacing:0px"></span><div class="arr" style="right:4.3px;top:4.1px;border-top-color:#000000"></div></div>
<div class="cell" style="left:370.4px;width:38.200000000000045px;top:329.22999999999996px;text-align:center">1</div>
<div class="cell" style="left:408.6px;width:241.89999999999998px;top:329.22999999999996px;padding-left:2.2px;letter-spacing:0.06px">Pinterest: Pinwand für Lied-Beiträge</div>
<div class="cell" style="left:794.3px;width:83.0px;top:329.22999999999996px;text-align:center;letter-spacing:-0.08px">27.08.2025</div>
<div class="rn" style="top:344.96999999999997px">22</div>
<div class="chip" style="left:34.5px;top:346.87px;width:200.4px;background:#e4e6ea"><span style="color:#000000;-webkit-text-stroke:0.1px #000000;letter-spacing:0.04px">Pinterest: Lied-Beiträge, täglich</span><div class="arr" style="right:4.3px;top:4.1px;border-top-color:#000000"></div></div>
<div class="chip" style="left:247.1px;top:346.87px;width:117.29999999999998px;background:#e6cff2"><span style="color:#5a3286;-webkit-text-stroke:0.1px #5a3286;letter-spacing:-0.1px">Social Media</span><div class="arr" style="right:4.3px;top:4.1px;border-top-color:#5a3286"></div></div>
<div class="chip" style="left:725.7px;top:346.87px;width:62.59999999999991px;background:#e4e6ea"><span style="color:#000000;-webkit-text-stroke:0.1px #000000;letter-spacing:0px"></span><div class="arr" style="right:4.3px;top:4.1px;border-top-color:#000000"></div></div>
<div class="cell" style="left:370.4px;width:38.200000000000045px;top:344.77px;text-align:center">3</div>
<div class="cell" style="left:408.6px;width:241.89999999999998px;top:344.77px;padding-left:2.2px;letter-spacing:0.06px">Pinterest: Pins mit Liedtexten</div>
<div class="cell" style="left:794.3px;width:83.0px;top:344.77px;text-align:center;letter-spacing:-0.08px">27.08.2025</div>
<div class="rn" style="top:360.51px">23</div>
<div class="chip" style="left:34.5px;top:362.41px;width:200.4px;background:#e4e6ea"><span style="color:#000000;-webkit-text-stroke:0.1px #000000;letter-spacing:0.04px">Pinterest: Lied-Beiträge, täglich</span><div class="arr" style="right:4.3px;top:4.1px;border-top-color:#000000"></div></div>
<div class="chip" style="left:247.1px;top:362.41px;width:117.29999999999998px;background:#e6cff2"><span style="color:#5a3286;-webkit-text-stroke:0.1px #5a3286;letter-spacing:-0.1px">Social Media</span><div class="arr" style="right:4.3px;top:4.1px;border-top-color:#5a3286"></div></div>
<div class="chip" style="left:725.7px;top:362.41px;width:62.59999999999991px;background:#e4e6ea"><span style="color:#000000;-webkit-text-stroke:0.1px #000000;letter-spacing:0px"></span><div class="arr" style="right:4.3px;top:4.1px;border-top-color:#000000"></div></div>
<div class="cell" style="left:370.4px;width:38.200000000000045px;top:360.31px;text-align:center">2</div>
<div class="cell" style="left:408.6px;width:241.89999999999998px;top:360.31px;padding-left:2.2px;letter-spacing:0.06px">Pinterest: Pins mit Beitragsbild + Beitragstitel</div>
<div class="cell" style="left:794.3px;width:83.0px;top:360.31px;text-align:center;letter-spacing:-0.08px">27.08.2025</div>
<div class="rn" style="top:376.04999999999995px">24</div>
<div class="chip" style="left:34.5px;top:377.95px;width:200.4px;background:#e4e6ea"><span style="color:#000000;-webkit-text-stroke:0.1px #000000;letter-spacing:0.12px">richtiger Weg</span><div class="arr" style="right:4.3px;top:4.1px;border-top-color:#000000"></div></div>
<div class="chip" style="left:247.1px;top:377.95px;width:117.29999999999998px;background:#e4e6ea"><span style="color:#000000;-webkit-text-stroke:0.1px #000000;letter-spacing:0.06px">Organisation</span><div class="arr" style="right:4.3px;top:4.1px;border-top-color:#000000"></div></div>
<div class="chip" style="left:725.7px;top:377.95px;width:62.59999999999991px;background:#e4e6ea"><span style="color:#000000;-webkit-text-stroke:0.1px #000000;letter-spacing:0px"></span><div class="arr" style="right:4.3px;top:4.1px;border-top-color:#000000"></div></div>
<div class="cell" style="left:408.6px;width:241.89999999999998px;top:375.84999999999997px;padding-left:2.2px;letter-spacing:0.06px">Wochenrückblick &amp; Planung KW36</div>
<div class="cell" style="left:651.0px;width:68.5px;top:375.84999999999997px;text-align:center">1</div>
<div class="cell" style="left:794.3px;width:83.0px;top:375.84999999999997px;text-align:center;letter-spacing:-0.08px">31.08.2025</div>
<div class="rn" style="top:391.59px">25</div>
<div class="chip" style="left:34.5px;top:393.49px;width:200.4px;background:#e4e6ea"><span style="color:#000000;-webkit-text-stroke:0.1px #000000;letter-spacing:0px">TikTok: zwei Shorts, täglich</span><div class="arr" style="right:4.3px;top:4.1px;border-top-color:#000000"></div></div>
<div class="chip" style="left:247.1px;top:393.49px;width:117.29999999999998px;background:#e6cff2"><span style="color:#5a3286;-webkit-text-stroke:0.1px #5a3286;letter-spacing:-0.1px">Social Media</span><div class="arr" style="right:4.3px;top:4.1px;border-top-color:#5a3286"></div></div>
<div class="chip" style="left:725.7px;top:393.49px;width:62.59999999999991px;background:#e4e6ea"><span style="color:#000000;-webkit-text-stroke:0.1px #000000;letter-spacing:0px"></span><div class="arr" style="right:4.3px;top:4.1px;border-top-color:#000000"></div></div>
<div class="cell" style="left:408.6px;width:241.89999999999998px;top:391.39px;padding-left:2.2px;letter-spacing:0.06px">TikTok: Shorts planen</div>
<div class="cell" style="left:794.3px;width:83.0px;top:391.39px;text-align:center;letter-spacing:-0.08px">05.09.2025</div>
<div class="rn" style="top:407.13px">26</div>
<div class="chip" style="left:34.5px;top:409.03000000000003px;width:200.4px;background:#e4e6ea"><span style="color:#000000;-webkit-text-stroke:0.1px #000000;letter-spacing:0.12px">richtiger Weg</span><div class="arr" style="right:4.3px;top:4.1px;border-top-color:#000000"></div></div>
<div class="chip" style="left:247.1px;top:409.03000000000003px;width:117.29999999999998px;background:#e4e6ea"><span style="color:#000000;-webkit-text-stroke:0.1px #000000;letter-spacing:0.06px">Organisation</span><div class="arr" style="right:4.3px;top:4.1px;border-top-color:#000000"></div></div>
<div class="chip" style="left:725.7px;top:409.03000000000003px;width:62.59999999999991px;background:#e4e6ea"><span style="color:#000000;-webkit-text-stroke:0.1px #000000;letter-spacing:0px"></span><div class="arr" style="right:4.3px;top:4.1px;border-top-color:#000000"></div></div>
<div class="cell" style="left:408.6px;width:241.89999999999998px;top:406.93px;padding-left:2.2px;letter-spacing:0.06px">Wochenrückblick &amp; Planung KW37</div>
<div class="cell" style="left:651.0px;width:68.5px;top:406.93px;text-align:center">1</div>
<div class="cell" style="left:794.3px;width:83.0px;top:406.93px;text-align:center;letter-spacing:-0.08px">07.09.2025</div>
<div class="rn" style="top:422.67px">27</div>
<div class="chip" style="left:34.5px;top:424.57000000000005px;width:200.4px;background:#e4e6ea"><span style="color:#000000;-webkit-text-stroke:0.1px #000000;letter-spacing:0.16px">ein Liedbeitrag täglich veröffentlichen</span><div class="arr" style="right:4.3px;top:4.1px;border-top-color:#000000"></div></div>
<div class="chip" style="left:247.1px;top:424.57000000000005px;width:117.29999999999998px;background:#ffe5a0"><span style="color:#473821;-webkit-text-stroke:0.1px #473821;letter-spacing:0.13px">Webseite / Content</span><div class="arr" style="right:4.3px;top:4.1px;border-top-color:#473821"></div></div>
<div class="chip" style="left:725.7px;top:424.57000000000005px;width:62.59999999999991px;background:#e4e6ea"><span style="color:#000000;-webkit-text-stroke:0.1px #000000;letter-spacing:0px"></span><div class="arr" style="right:4.3px;top:4.1px;border-top-color:#000000"></div></div>
<div class="cell" style="left:408.6px;width:241.89999999999998px;top:422.47px;padding-left:2.2px;letter-spacing:0.06px">20 Liedseiten erstellen</div>
<div class="cell" style="left:794.3px;width:83.0px;top:422.47px;text-align:center;letter-spacing:-0.08px">19.09.2025</div>
<div class="rn" style="top:438.21px">28</div>
<div class="chip" style="left:34.5px;top:440.11px;width:200.4px;background:#e4e6ea"><span style="color:#000000;-webkit-text-stroke:0.1px #000000;letter-spacing:0px">erstes Produkt auf Etsy</span><div class="arr" style="right:4.3px;top:4.1px;border-top-color:#000000"></div></div>
<div class="chip" style="left:247.1px;top:440.11px;width:117.29999999999998px;background:#ffc8aa"><span style="color:#753800;-webkit-text-stroke:0.1px #753800;letter-spacing:0.15px">Monetarisierung</span><div class="arr" style="right:4.3px;top:4.1px;border-top-color:#753800"></div></div>
<div class="chip" style="left:725.7px;top:440.11px;width:62.59999999999991px;background:#e4e6ea"><span style="color:#000000;-webkit-text-stroke:0.1px #000000;letter-spacing:0px"></span><div class="arr" style="right:4.3px;top:4.1px;border-top-color:#000000"></div></div>
<div class="cell" style="left:370.4px;width:38.200000000000045px;top:438.01px;text-align:center">1</div>
<div class="cell" style="left:408.6px;width:241.89999999999998px;top:438.01px;padding-left:2.2px;letter-spacing:0.06px">Weihnachtslieder Upsell - eigenes Produkt erstellen</div>
<div class="cell" style="left:651.0px;width:68.5px;top:438.01px;text-align:center">3</div>
<div class="cell" style="left:794.3px;width:83.0px;top:438.01px;text-align:center;letter-spacing:-0.08px">21.09.2025</div>
<div class="rn" style="top:453.74999999999994px">29</div>
<div class="chip" style="left:34.5px;top:455.65px;width:200.4px;background:#e4e6ea"><span style="color:#000000;-webkit-text-stroke:0.1px #000000;letter-spacing:0px">Funnel Weihnachtslieder + Kinderlie...</span><div class="arr" style="right:4.3px;top:4.1px;border-top-color:#000000"></div></div>
<div class="chip" style="left:247.1px;top:455.65px;width:117.29999999999998px;background:#d4edbc"><span style="color:#11734b;-webkit-text-stroke:0.1px #11734b;letter-spacing:0px">E-Mail Marketing</span><div class="arr" style="right:4.3px;top:4.1px;border-top-color:#11734b"></div></div>
<div class="chip" style="left:725.7px;top:455.65px;width:62.59999999999991px;background:#e4e6ea"><span style="color:#000000;-webkit-text-stroke:0.1px #000000;letter-spacing:0px"></span><div class="arr" style="right:4.3px;top:4.1px;border-top-color:#000000"></div></div>
<div class="cell" style="left:370.4px;width:38.200000000000045px;top:453.54999999999995px;text-align:center">1</div>
<div class="cell" style="left:408.6px;width:241.89999999999998px;top:453.54999999999995px;padding-left:2.2px;letter-spacing:0.06px">Weihnachtslieder - Leadmagnet erstellen</div>
<div class="cell" style="left:651.0px;width:68.5px;top:453.54999999999995px;text-align:center">2</div>
<div class="cell" style="left:794.3px;width:83.0px;top:453.54999999999995px;text-align:center;letter-spacing:-0.08px">21.09.2025</div>
<svg style="left:0;top:0" width="1024" height="461.3" viewBox="0 0 1024 461.3"><path d="M0 49.51H1024M0 65.05H1024M0 80.59H1024M0 96.13H1024M0 111.67H1024M0 127.21H1024M0 142.75H1024M0 158.29H1024M0 173.83H1024M0 189.37H1024M0 204.91H1024M0 220.45H1024M0 235.99H1024M0 251.53H1024M0 267.07H1024M0 282.61H1024M0 298.15H1024M0 313.69H1024M0 329.23H1024M0 344.77H1024M0 360.31H1024M0 375.85H1024M0 391.39H1024M0 406.93H1024M0 422.47H1024M0 438.01H1024M0 453.55H1024M0 469.09H1024M0 484.63H1024" stroke="rgba(0,0,0,0.115)" stroke-width="1" fill="none"/><path d="M28.60 34.00V461.30M241.20 34.00V461.30M370.70 34.00V461.30M408.90 34.00V461.30M651.30 34.00V461.30M719.80 34.00V461.30M794.60 34.00V461.30M877.60 34.00V461.30" stroke="rgba(0,0,0,0.085)" stroke-width="1" fill="none"/></svg>
<div class="a" style="left:646.9px;top:112.10000000000001px;width:0;height:0;border-left:4.3px solid transparent;border-top:4.3px solid #000"></div>
<div class="a" style="left:646.9px;top:454.7px;width:0;height:0;border-left:4.3px solid transparent;border-top:4.3px solid #000"></div>
<div class="a" style="left:28.2px;top:15.200000000000003px;width:213.5px;height:16.89999999999999px;border:2px solid #3280e6"></div>
<div class="a" style="left:238.1px;top:28.400000000000002px;width:6.6px;height:6.6px;border-radius:50%;background:#3280e6;border:0.8px solid #fff"></div>
</div>
<div class="a" style="left:0;top:552.3px;width:1024px;height:8.7px;background:#fff"></div>
<div class="a" style="left:0;top:552.3px;width:28px;height:8.7px;background:#f8f9fa"></div>
<div class="a" style="left:30.3px;top:554.4px;width:630px;height:5.2px;border-radius:2.6px;background:#dadce0"></div>
<div class="a" style="left:0;top:560.8px;width:1024px;height:1px;background:#e5e7ea"></div>
<div class="a" style="left:0;top:561.5px;width:1024px;height:24px;background:#f9fbfd"></div>
<div class="a" style="left:188.9px;top:561.3px;width:72.7px;height:24px;background:#e1e9f7"></div>
<svg style="left:35.5px;top:570.5px" width="7.2" height="7.2" viewBox="0 0 7.2 7.2"><path d="M0 3.6H7.2M3.6 0V7.2" stroke="#444746" stroke-width="1.25"/></svg>
<svg style="left:60.3px;top:570.5px" width="9.4" height="7" viewBox="0 0 9.4 7"><path d="M0 0.7H9.4M0 3.5H9.4M0 6.3H9.4" stroke="#444746" stroke-width="1.2"/></svg>
<div class="tab" style="left:94px">Projektübersicht</div>
<div class="tarr" style="left:176.5px"></div>
<div class="tab" style="left:196.8px;color:#0b57d0;-webkit-text-stroke:0;font-weight:700">Aufgaben</div>
<div class="tarr" style="left:248.9px;border-top-color:#0b57d0"></div>
<div class="tab" style="left:269.7px">Ideen</div>
<div class="tarr" style="left:302.4px"></div>
<div class="tab" style="left:323.5px">Woche</div>
<div class="tarr" style="left:361px"></div>
<div class="tab" style="left:382.9px">Monat</div>
<div class="tarr" style="left:418px"></div>
<div class="tab" style="left:439.5px">Dateien + Uploads</div>
<div class="tarr" style="left:528.8px"></div>
</body></html>
